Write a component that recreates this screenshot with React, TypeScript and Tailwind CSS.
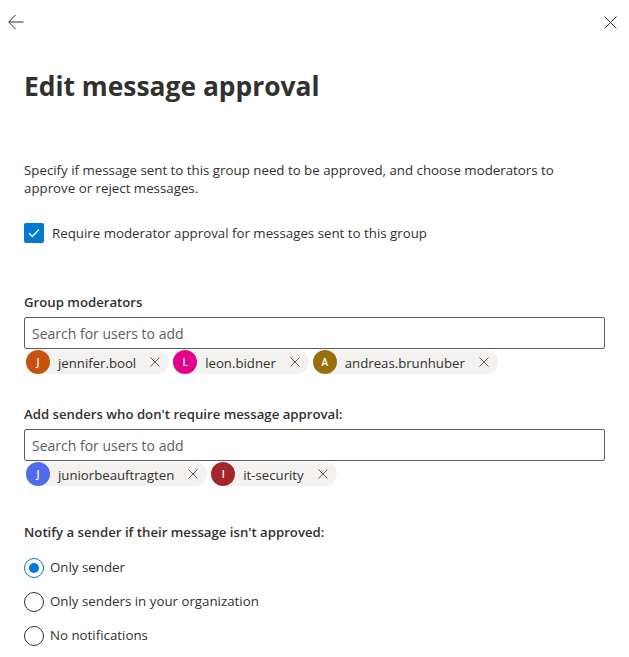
import React from 'react'

type Person = { name: string; initial: string; color: string }

const moderators: Person[] = [
  { name: 'jennifer.bool', initial: 'J', color: 'bg-[#ca5010]' },
  { name: 'leon.bidner', initial: 'L', color: 'bg-[#e3008c]' },
  { name: 'andreas.brunhuber', initial: 'A', color: 'bg-[#986f0b]' },
]

const senders: Person[] = [
  { name: 'juniorbeauftragten', initial: 'J', color: 'bg-[#4f6bed]' },
  { name: 'it-security', initial: 'I', color: 'bg-[#a4262c]' },
]

function Chip({ p }: { p: Person }) {
  return (
    <div className="flex items-center h-[24px] rounded-full bg-[#f3f2f1]">
      <div
        className={`w-[24px] h-[24px] rounded-full ${p.color} text-white text-[10px] font-semibold flex items-center justify-center`}
      >
        {p.initial}
      </div>
      <span className="ml-[8px] text-[13.2px] leading-[24px] pt-[1px] text-[#323130]">{p.name}</span>
      <svg width="10" height="10" viewBox="0 0 10 10" className="ml-[14px] mr-[9px] text-[#605e5c]">
        <path d="M0.5 0.5 L9.5 9.5 M9.5 0.5 L0.5 9.5" stroke="currentColor" strokeWidth="1" />
      </svg>
    </div>
  )
}

function PeoplePicker({ label, people }: { label: string; people: Person[] }) {
  return (
    <div>
      <div className="text-[13.2px] leading-[20px] font-semibold text-[#323130]">{label}</div>
      <div className="mt-[5px] h-[32px] border border-[#605e5c] rounded-[2px] flex items-center px-[7px] text-[14px] text-[#605e5c]">
        Search for users to add
      </div>
      <div className="mt-[1px] ml-[2px] flex gap-[4px]">
        {people.map((p) => (
          <Chip key={p.name} p={p} />
        ))}
      </div>
    </div>
  )
}

function Radio({ label, checked }: { label: string; checked?: boolean }) {
  return (
    <div className="flex items-center h-[20px]">
      <div
        className={`w-[20px] h-[20px] rounded-full border flex items-center justify-center ${
          checked ? 'border-[#0078d4]' : 'border-[#323130]'
        }`}
      >
        {checked && <div className="w-[10px] h-[10px] rounded-full bg-[#0078d4]" />}
      </div>
      <span className="ml-[6px] text-[13.3px] text-[#323130]">{label}</span>
    </div>
  )
}

export default function App() {
  return (
    <div
      className="w-[629px] h-[657px] bg-white overflow-hidden text-[#323130]"
      style={{ fontFamily: '"Open Sans", "Liberation Sans", sans-serif' }}
    >
      {/* Top bar */}
      <div className="h-[44px] flex items-center justify-between pl-[8px] pr-[12px]">
        <svg width="16" height="16" viewBox="0 0 16 16" className="text-[#323130]">
          <path d="M15.5 8 H1 M7.5 1 L0.7 8 L7.5 15" stroke="currentColor" strokeWidth="1" fill="none" />
        </svg>
        <svg width="13" height="13" viewBox="0 0 13 13" className="text-[#323130]">
          <path d="M0.5 0.5 L12.5 12.5 M12.5 0.5 L0.5 12.5" stroke="currentColor" strokeWidth="1" />
        </svg>
      </div>

      <div className="px-[24px]">
        <h1 className="mt-[24px] text-[26.4px] leading-[36px] font-bold text-[#323130]">Edit message approval</h1>

        <p className="mt-[57px] text-[13.3px] leading-[18px] text-[#323130] pr-[40px]">
          Specify if message sent to this group need to be approved, and choose moderators to approve or reject
          messages.
        </p>

        <div className="mt-[26px] flex items-center h-[20px]">
          <div className="w-[20px] h-[20px] rounded-[2px] bg-[#0078d4] flex items-center justify-center">
            <svg width="12" height="10" viewBox="0 0 12 10">
              <path d="M1 5.2 L4.3 8.5 L11 1.5" stroke="white" strokeWidth="1.3" fill="none" />
            </svg>
          </div>
          <span className="ml-[8px] pt-[1px] text-[13.3px] text-[#323130]">
            Require moderator approval for messages sent to this group
          </span>
        </div>

        <div className="mt-[49px]">
          <PeoplePicker label="Group moderators" people={moderators} />
        </div>

        <div className="mt-[30px]">
          <PeoplePicker label="Add senders who don't require message approval:" people={senders} />
        </div>

        <div className="mt-[36px] text-[13.2px] leading-[20px] font-semibold text-[#323130]">
          Notify a sender if their message isn't approved:
        </div>

        <div className="mt-[16px] flex flex-col gap-[14px]">
          <Radio label="Only sender" checked />
          <Radio label="Only senders in your organization" />
          <Radio label="No notifications" />
        </div>
      </div>
    </div>
  )
}
